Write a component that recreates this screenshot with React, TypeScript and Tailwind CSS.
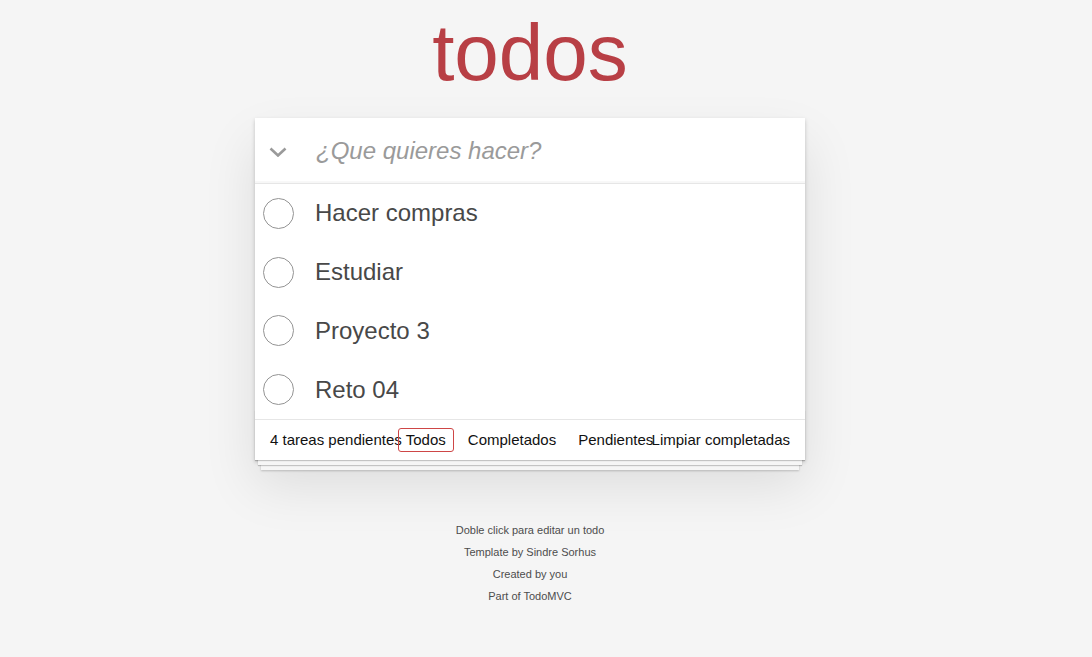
import React from "react";

const todos = ["Hacer compras", "Estudiar", "Proyecto 3", "Reto 04"];
const filters = ["Todos", "Completados", "Pendientes"];

function ToggleAll() {
  return (
    <svg width="18" height="10" viewBox="0 0 18 10" className="block">
      <path d="M1.5 1.5 L9 8.5 L16.5 1.5" fill="none" stroke="#9a9a9a" strokeWidth="2.6" />
    </svg>
  );
}

export default function App() {
  return (
    <div
      className="min-h-[657px] w-full bg-[#f5f5f5] pt-[5px] text-[#111]"
      style={{ fontFamily: '"Liberation Sans", Arial, sans-serif' }}
    >
      <div className="ml-[255px] w-[550px]">
        <h1 className="mb-[17px] h-[96px] text-center text-[80px] leading-[96px] text-[#b83f45]">
          todos
        </h1>

        <section className="relative bg-white shadow-[0_2px_4px_0_rgba(0,0,0,0.2),0_25px_50px_0_rgba(0,0,0,0.1)]">
          <header className="flex h-[65px] items-center shadow-[inset_0_-2px_1px_rgba(0,0,0,0.03)]">
            <div className="flex w-[60px] pl-[14px] pt-[2px]">
              <ToggleAll />
            </div>
            <span className="pl-[1px] text-[24px] italic text-[#9a9a9a]">¿Que quieres hacer?</span>
          </header>

          <ul className="border-t border-[#e6e6e6]">
            {todos.map((t) => (
              <li key={t} className="flex h-[58.75px] items-center">
                <div className="flex w-[60px] pl-[8px]">
                  <div className="h-[31px] w-[31px] rounded-full border border-[#949494]" />
                </div>
                <span className="text-[24px] text-[#484848]">{t}</span>
              </li>
            ))}
          </ul>

          <footer className="relative flex h-[41px] items-center border-t border-[#e6e6e6] px-[15px] text-[15px]">
            <div className="pointer-events-none absolute inset-x-0 bottom-0 h-[50px] shadow-[0_1px_1px_rgba(0,0,0,0.2),0_8px_0_-3px_#f6f6f6,0_9px_1px_-3px_rgba(0,0,0,0.2),0_16px_0_-6px_#f6f6f6,0_17px_2px_-6px_rgba(0,0,0,0.2)]" />
            <span className="relative shrink-0 whitespace-nowrap">4 tareas pendientes</span>
            <div className="relative -ml-[7px] flex shrink-0">
              {filters.map((f, i) => (
                <a
                  key={f}
                  className={`mx-[3px] whitespace-nowrap rounded-[3px] border px-[7px] py-[3px] leading-[16px] ${
                    i === 0 ? "border-[#ce4646]" : "border-transparent"
                  }`}
                >
                  {f}
                </a>
              ))}
            </div>
            <button type="button" className="absolute right-[15px] whitespace-nowrap leading-[20px]">
              Limpiar completadas
            </button>
          </footer>
        </section>

        <div className="mt-[65px] flex flex-col items-center gap-[11px] text-[11px] leading-[11px] text-[#4d4d4d]">
          <p>Doble click para editar un todo</p>
          <p>Template by Sindre Sorhus</p>
          <p>Created by you</p>
          <p>Part of TodoMVC</p>
        </div>
      </div>
    </div>
  );
}
